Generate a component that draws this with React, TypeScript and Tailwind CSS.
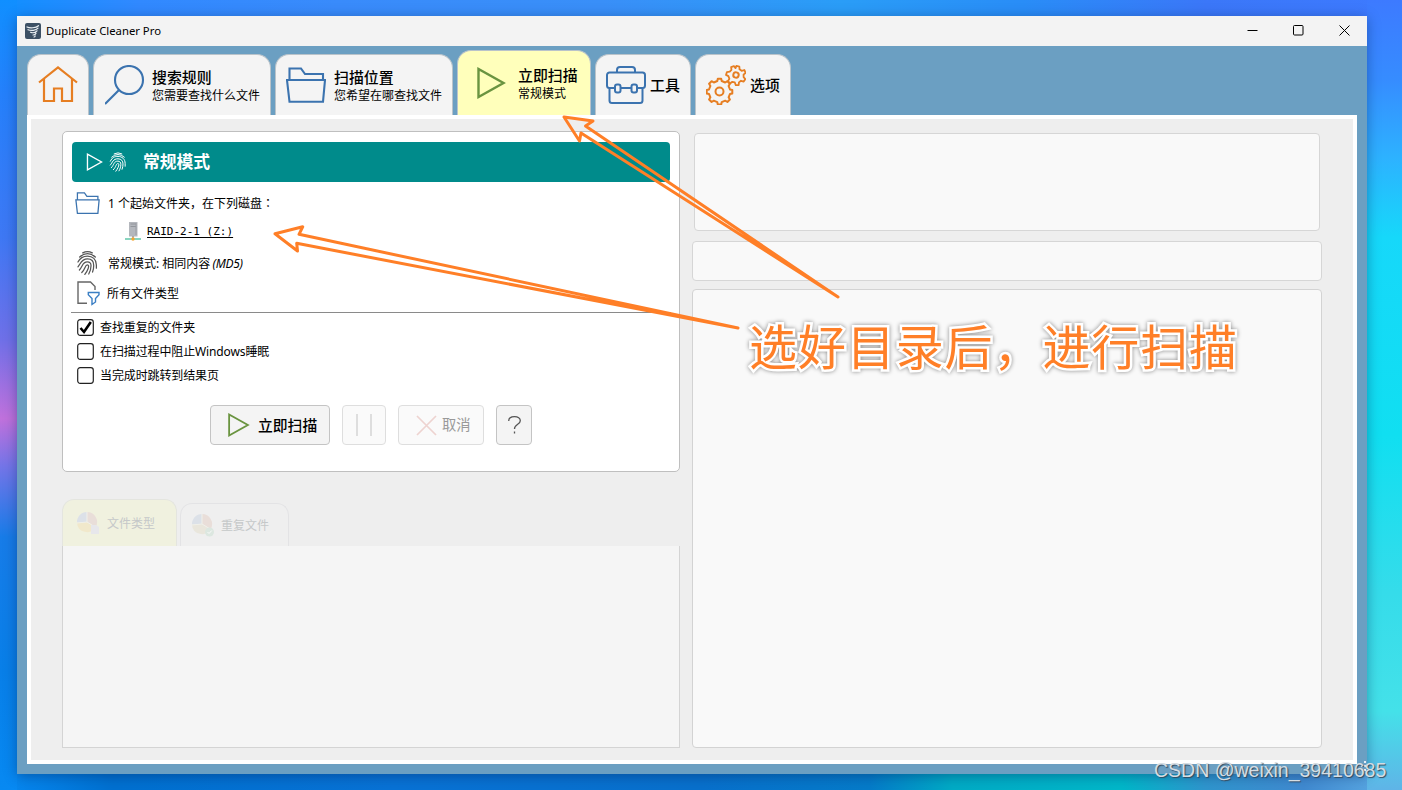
import { ReactNode } from "react";

type IconProps = {
  className?: string;
};

type TabProps = {
  title?: string;
  subTitle?: string;
  icon: ReactNode;
  isActive?: boolean;
  className: string;
};

type CheckItem = {
  label: string;
  checked: boolean;
};

const checkItems: CheckItem[] = [
  { label: "查找重复的文件夹", checked: true },
  { label: "在扫描过程中阻止Windows睡眠", checked: false },
  { label: "当完成时跳转到结果页", checked: false },
];

const HomeIcon = () => (
  <svg width="40" height="40" viewBox="0 0 40 40" fill="none" stroke="#e67e22" strokeWidth="2.200">
    <path d="M1 17.500 20 2.500l19 15M6 14v22h10V23.500h8V36h10V14" />
  </svg>
);

const SearchIcon = () => (
  <svg width="40" height="40" viewBox="0 0 40 40" fill="none" stroke="#3b73af" strokeWidth="2.100">
    <circle cx="24" cy="15" r="14" />
    <path d="M14 25 0 39" />
  </svg>
);

const FolderIcon = ({ className }: IconProps) => (
  <svg className={className} viewBox="0 0 40 36" fill="none" stroke="#3b73af" strokeWidth="2.100">
    <path d="M3.500 12V1.500h11.500l4 5.500H37v5M1 13h38l-2 21.800H3.500z" />
  </svg>
);

const PlayIcon = ({ className }: IconProps) => (
  <svg className={className} viewBox="0 0 30 32" fill="none" stroke="currentColor" strokeWidth="2.400">
    <path d="M2.500 2v28l25-14z" />
  </svg>
);

const ToolIcon = () => (
  <svg width="40" height="38" viewBox="0 0 40 38" fill="none" stroke="#3b73af" strokeWidth="2">
    <path d="M11 6.500V4a3 3 0 0 1 3-3h12a3 3 0 0 1 3 3v2.500" />
    <path d="M8 22H3.500A2.500 2.500 0 0 1 1 19.500V9a2.500 2.500 0 0 1 2.500-2.500h33A2.500 2.500 0 0 1 39 9v10.500a2.500 2.500 0 0 1-2.500 2.500H32M14.500 22h11" />
    <path d="M3.500 22v12.500A2.500 2.500 0 0 0 6 37h28a2.500 2.500 0 0 0 2.500-2.500V22" />
    <rect x="9" y="18.500" width="5.500" height="8" rx="2" />
    <rect x="25.500" y="18.500" width="5.500" height="8" rx="2" />
  </svg>
);

const gearPath =
  "M-2.200-10.500-1.700-12.800h3.400l.5 2.300 3.500 1.500 2.200-1.300 2.500 2.500-1.300 2.200 1.400 3.600 2.300.5v3.400l-2.300.5-1.400 3.400 1.300 2.200-2.500 2.500-2.200-1.300-3.500 1.500-.5 2.300h-3.400l-.5-2.300-3.500-1.500-2.200 1.300-2.500-2.500 1.300-2.200-1.400-3.400-2.300-.5v-3.400l2.300-.5 1.400-3.600-1.300-2.200 2.500-2.500 2.200 1.300z";

const GearsIcon = () => (
  <svg width="40" height="40" viewBox="0 0 40 40" fill="none" stroke="#e67e22" strokeWidth="2" strokeLinejoin="round">
    <path d={gearPath} transform="translate(13.500 26.500)" />
    <circle cx="13.500" cy="26.500" r="4" />
    <g transform="translate(30 10) rotate(12)">
      <path d="M-1.500-9h3l.8 2.700 2.300 1 2.500-1.300L9-4.200 7.300-2l.6 2.500L10 2 8.900 4.800l-2.800-.2-1.700 2L4.700 9.300 1.900 10 .4 7.500h-2.600L-4.200 9.500l-2.400-1.800L-5.700 5l-1.500-2.300-2.600-.7.300-3 2.700-.9 1.300-2.200-.9-2.600 2.500-1.600 2 1.700z" strokeWidth="1.800" />
      <circle r="2.700" />
    </g>
  </svg>
);

const FingerprintIcon = ({ className }: IconProps) => (
  <svg className={className} viewBox="0 0 22 26" fill="none" stroke="currentColor" strokeWidth="1.300" strokeLinecap="round">
    <path d="M6 2.400Q11-.4 16 2.400M2.800 6.700Q11-.5 19.200 6.700" />
    <path d="M1 12C3.500 7 6.500 5.700 11 5.700c5.300 0 9.300 3.500 9.300 9.300v3.500" />
    <path d="M1 17C4 13.500 4.500 8.800 11 8.800c4.300 0 6.500 3 6.500 6.700 0 2.700-.4 4.700-1.200 7" />
    <path d="M2.500 20.300c3.700-4 3-8.400 8.300-8.400 2.700 0 3.900 1.800 3.900 4.100 0 3.500-1 6-2.400 8.500" />
    <path d="M5 23c4-4 3.300-8 5.800-8 3.300 0 0 6.500-2.600 10" />
  </svg>
);

const FileFilterIcon = () => (
  <svg width="24" height="25" viewBox="0 0 24 25" fill="none" strokeWidth="1.400">
    <path d="M10 22.300H1V1h12.500L18 5.500V9" stroke="#666" />
    <path d="M11.300 11.500H22v2.200L18.500 17.500V21L15 23.500v-6L11.300 13.700z" stroke="#3b7fc4" />
  </svg>
);

const DriveIcon = () => (
  <svg width="18" height="20" viewBox="0 0 18 20">
    <path d="M5 1h8.500v14.500H5z" fill="#b4b7bd" />
    <path d="M6.500 3h5.500M6.500 5.500h5.500" stroke="#92959b" />
    <path d="M12 2v12" stroke="#9a9da4" />
    <path d="M9 15v2" stroke="#777" />
    <path d="M1 18h16" stroke="#55c3a4" strokeWidth="1.400" />
    <circle cx="9" cy="18" r="1.700" fill="#f3a533" />
  </svg>
);

const PieIcon = ({ checked }: { checked: boolean }) => (
  <svg width="24" height="24" viewBox="0 0 24 24">
    <path d="M11 11V1a10 10 0 0 0-10 10.800z" fill="#dce1e8" />
    <path d="M11 11V1a10 10 0 0 1 8.700 15z" fill="#e9ded9" />
    <path d="m11 11 8.700 5A10 10 0 0 1 1 11.800z" fill={checked ? "#e9e6dc" : "#f1e8cb"} />
    <path d="M11 1v10l9 5.500M11 11l-10 1" stroke="#f0f0ea" fill="none" />
    {checked ? (
      <>
        <circle cx="18.500" cy="19" r="4.500" fill="#dce7e0" />
        <path d="m16.500 19 1.500 1.500 2.800-3" stroke="#f8faf8" fill="none" />
      </>
    ) : (
      <path d="M15 14h5l3 2v7h-8z" fill="#e7e7eb" />
    )}
  </svg>
);

const Tab = ({ title, subTitle, icon, isActive, className }: TabProps) => {
  return (
    <div
      className={`flex items-center rounded-t-[14px] border-t border-x border-[#b9c3ca] ${
        isActive ? "h-[65px] bg-[#ffffbb]" : "h-[61px] bg-[#f4f4f4]"
      } ${className}`}
    >
      {icon}
      {title && (
        <div className="flex flex-col whitespace-nowrap">
          <span className={`text-[14.900px] leading-[18px] font-medium ${subTitle ? "pt-[2px] pb-px" : "pb-px"}`}>{title}</span>
          {subTitle && <span className="text-[12px] leading-[18px]">{subTitle}</span>}
        </div>
      )}
    </div>
  );
};

const TitleBar = () => {
  return (
    <div className="flex h-[30px] shrink-0 items-center bg-[#f3f3f3] pl-2">
      <svg width="16" height="16" viewBox="0 0 16 16">
        <rect width="16" height="16" rx="2" fill="#3c5064" />
        <path
          d="M2 4c3 1.500 9 1 11.500-1.300M3 6.700c3 1.300 8 .8 10-1.500M5.500 9.300c2 .7 5 .3 6.500-1.500M8 12c1.500 0 2.500-.5 3-1.800M9 14c.5 0 1-.5 1.200-1"
          stroke="#e9eef2"
          strokeWidth="1.200"
          fill="none"
          strokeLinecap="round"
        />
      </svg>
      <span className="ml-[5px] text-[11.300px]">Duplicate Cleaner Pro</span>
      <div className="mr-[17px] ml-auto flex gap-[35px] pb-[2px]">
        <svg width="11" height="11" viewBox="0 0 11 11" stroke="#000" fill="none">
          <path d="M.5 5.500h10" />
        </svg>
        <svg width="11" height="11" viewBox="0 0 11 11" stroke="#000" fill="none">
          <rect x=".5" y=".5" width="9.500" height="9.500" rx="1" />
        </svg>
        <svg width="11" height="11" viewBox="0 0 11 11" stroke="#000" fill="none">
          <path d="m.5.500 10 10m0-10-10 10" />
        </svg>
      </div>
    </div>
  );
};

const ScanPanel = () => {
  return (
    <div className="flex h-[341px] flex-col rounded-[5px] border border-[#bfbfbf] bg-white px-[9px] pt-[10px]">
      {/* Header */}
      <div className="flex h-10 shrink-0 items-center rounded-[4px] bg-[#008b8b] pl-[13px] text-white">
        <PlayIcon className="h-[18px] w-[19px]" />
        <FingerprintIcon className="ml-[5px] h-5 w-[18px]" />
        <span className="ml-4 text-[16.800px] leading-6 font-bold">常规模式</span>
      </div>

      {/* Summary */}
      <div className="mt-[9px] flex h-6 items-center pl-[3px]">
        <FolderIcon className="h-[22px] w-[25px]" />
        <span className="ml-2">
          1 个起始文件夹，在下列磁盘<span className="font-['Noto_Sans_CJK_TC']">：</span>
        </span>
      </div>
      <div className="mt-[6px] flex h-5 items-center pl-[52px]">
        <DriveIcon />
        <span className="ml-[5px] pt-[2px] font-['DejaVu_Sans_Mono'] text-[11px] underline underline-offset-2">RAID-2-1 (Z:)</span>
      </div>
      <div className="mt-[9px] flex h-[26px] items-center pl-[5px]">
        <FingerprintIcon className="h-[26px] w-[21px] text-[#555]" />
        <span className="ml-[10px] pt-[2px]">
          常规模式: 相同内容 <i className="-ml-px tracking-[-0.3px]">(MD5)</i>
        </span>
      </div>
      <div className="mt-1 flex h-[26px] items-center pl-[5px]">
        <FileFilterIcon />
        <span className="ml-[6px] pt-[2px]">所有文件类型</span>
      </div>
      <div className="-mx-[1px] mt-[6px] border-t border-[#8a8a8a]" />

      {/* Options */}
      <div className="mt-[2px] flex flex-col pl-[5px]">
        {checkItems?.map((el, ind) => (
          <div key={ind} className="flex h-6 items-center gap-[6px]">
            <svg width="17" height="17" viewBox="0 0 17 17" fill="none" stroke="#222">
              <rect x=".7" y=".7" width="15.600" height="15.600" rx="2.500" strokeWidth="1.200" />
              {el.checked && <path d="m3.500 9 3.500 4 6.800-10" stroke="#000" strokeWidth="2.600" />}
            </svg>
            <span className="pt-[2px] tracking-[-0.12px]">{el.label}</span>
          </div>
        ))}
      </div>

      {/* Buttons */}
      <div className="mt-[18px] flex gap-3 pl-[138px] text-[14.800px] font-medium">
        <button className="flex h-10 w-[120px] items-center rounded-[4px] border border-[#c4c4c4] bg-[#f4f4f4] pl-4">
          <PlayIcon className="h-6 w-[23px] text-[#6a9440]" />
          <span className="ml-2 whitespace-nowrap">立即扫描</span>
        </button>
        <button className="flex h-10 w-11 items-center justify-center gap-3 rounded-[4px] border border-[#dedede] bg-[#fafafa]">
          <span className="h-[22px] w-[2px] bg-[#dedede]" />
          <span className="h-[22px] w-[2px] bg-[#dedede]" />
        </button>
        <button className="flex h-10 w-[86px] items-center rounded-[4px] border border-[#dedede] bg-[#fafafa] pl-[17px] text-[14.300px] font-normal text-[#999]">
          <svg width="21" height="21" viewBox="0 0 21 21" stroke="#eed3d0" strokeWidth="1.700">
            <path d="m1 1 19 19m0-19-19 19" />
          </svg>
          <span className="ml-[5px] whitespace-nowrap">取消</span>
        </button>
        <button className="flex h-10 w-9 items-center justify-center rounded-[4px] border border-[#c4c4c4] bg-[#f4f4f4]">
          <svg width="13" height="18" viewBox="0 0 13 18" fill="none" stroke="#555" strokeWidth="1.300">
            <path d="M.7 5C.7 2.300 3 .7 6.500.7s5.800 1.500 5.800 4C12.300 8.500 6.500 8 6.500 13M6.500 15.500v2" />
          </svg>
        </button>
      </div>
    </div>
  );
};

const ResultTabs = () => {
  return (
    <div className="mt-[27px] flex h-[249px] flex-col">
      <div className="flex h-[47px] items-end gap-[3px] text-[#c5c8c9]">
        <div className="flex h-[47px] w-[115px] items-center rounded-t-[12px] border-x border-t border-[#e4e5df] bg-[#f0f1df] pl-[13px]">
          <PieIcon checked={false} />
          <span className="ml-[7px] pt-[2px]">文件类型</span>
        </div>
        <div className="flex h-[43px] w-[109px] items-center rounded-t-[12px] border-x border-t border-[#e3e3e5] bg-[#efefef] pl-[10px]">
          <PieIcon checked={true} />
          <span className="ml-[6px] pt-[2px]">重复文件</span>
        </div>
      </div>
      <div className="flex-1 border border-t-0 border-[#d4d4d4] bg-[#f5f5f5]" />
    </div>
  );
};

// Arrows and caption drawn over the window
const Annotation = () => {
  return (
    <>
      <svg className="pointer-events-none absolute inset-0" width="1402" height="790" viewBox="0 0 1402 790" fill="none" stroke="#ff7f27" strokeWidth="3" strokeLinecap="round" strokeLinejoin="round">
        <path d="M738 328 299 234.300l3.700-7.500L275 233.800l22.500 17.200-.8-7.700z" />
        <path d="M838 297 585.500 126l7.500-5-29-4 15.500 24 1.500-8z" />
      </svg>
      <div className="absolute top-[312px] left-[749px] text-[48px] leading-[70px] tracking-[0.9px] whitespace-nowrap text-[#ff7f27] [paint-order:stroke_fill] [-webkit-text-stroke:5px_white] drop-shadow-[0_0_2px_rgba(0,0,0,0.45)]">
        选好目录后，进行扫描
      </div>
      {/* Resize grip */}
      <svg className="absolute top-[761px] left-[1358px]" width="10" height="12" viewBox="0 0 10 12" fill="#e8eef5">
        <path d="M6 0h2v2H6zM3 4h2v2H3zM6 4h2v2H6zM0 8h2v2H0zM3 8h2v2H3zM6 8h2v2H6z" />
      </svg>
      <div className="absolute top-[758px] left-[1154px] font-['Liberation_Sans'] text-[19.500px] leading-6 whitespace-nowrap text-[#d5dde3] [text-shadow:1px_1px_1px_#344b5d]">
        CSDN @weixin_39410685
      </div>
    </>
  );
};

const App = () => {
  return (
    <div className="relative h-[790px] w-[1402px] overflow-hidden px-[17px] pt-4 font-['Noto_Sans','Noto_Sans_CJK_SC',sans-serif] text-[12px] text-black [background:linear-gradient(180deg,#108fff_0%,#2580fb_12%,#3e78f4_30%,#6f70e8_43%,#c071dc_53%,#7475e8_59%,#177ce8_68%,#087fe8_85%,#0789f2_100%)_0_0/17px_100%_no-repeat,linear-gradient(180deg,#3d7aff_0%,#368cff_10%,#2db2ff_20%,#16d8fa_30%,#10dff1_55%,#35dcea_75%,#44e1e9_90%,#5fb4e7_100%)_100%_0/35px_100%_no-repeat,linear-gradient(90deg,#0789f2_0%,#0070d0_8%,#0872d5_28%,#0870cc_50%,#057bc9_62%,#00abc5_68%,#00b7c9_80%,#2f95cd_86%,#408ad0_93%,#60b0e8_100%)_0_100%/100%_16px_no-repeat,linear-gradient(90deg,#108fff_0%,#3189ff_10%,#398bfb_24%,#398ff8_43%,#2a9df7_60%,#298df7_73%,#3b77f8_86%,#3d7aff_100%)]">
      <div className="flex h-[758px] w-[1350px] flex-col bg-[#6b9fc2] shadow-[0_2px_12px_rgba(0,30,80,0.4)]">
        <TitleBar />

        {/* Toolbar */}
        <div className="flex h-[69px] shrink-0 items-end gap-1 pl-[10px]">
          <Tab className="w-[62px] pl-[10px]" icon={<HomeIcon />} />
          <Tab className="w-[178px] gap-[7px] pl-[11px]" icon={<SearchIcon />} title="搜索规则" subTitle="您需要查找什么文件" />
          <Tab className="w-[178px] gap-2 pl-[10px]" icon={<FolderIcon className="h-9 w-10" />} title="扫描位置" subTitle="您希望在哪查找文件" />
          <Tab className="w-[134px] gap-[12px] pl-[18px]" icon={<PlayIcon className="h-8 w-[30px] text-[#6a9440]" />} title="立即扫描" subTitle="常规模式" isActive />
          <Tab className="w-[96px] gap-1 pl-[10px]" icon={<ToolIcon />} title="工具" />
          <Tab className="w-[96px] gap-1 pl-[10px]" icon={<GearsIcon />} title="选项" />
        </div>

        {/* Content */}
        <div className="mx-[10px] flex h-[649px] shrink-0 gap-3 border-4 border-white bg-[#eee] pt-3 pr-[31px] pl-[31px]">
          <div className="w-[618px] shrink-0">
            <ScanPanel />
            <ResultTabs />
          </div>
          <div className="flex w-[630px] flex-col pt-[2px]">
            <div className="mr-[2px] ml-[2px] h-[98px] rounded-[4px] border border-[#d6d6d6] bg-[#f9f9f9]" />
            <div className="mt-[10px] h-10 rounded-[4px] border border-[#d6d6d6] bg-[#f9f9f9]" />
            <div className="mt-2 h-[459px] rounded-[4px] border border-[#d3d3d3] bg-[#f9f9f9]" />
          </div>
        </div>
      </div>
      <Annotation />
    </div>
  );
};

export default App;
